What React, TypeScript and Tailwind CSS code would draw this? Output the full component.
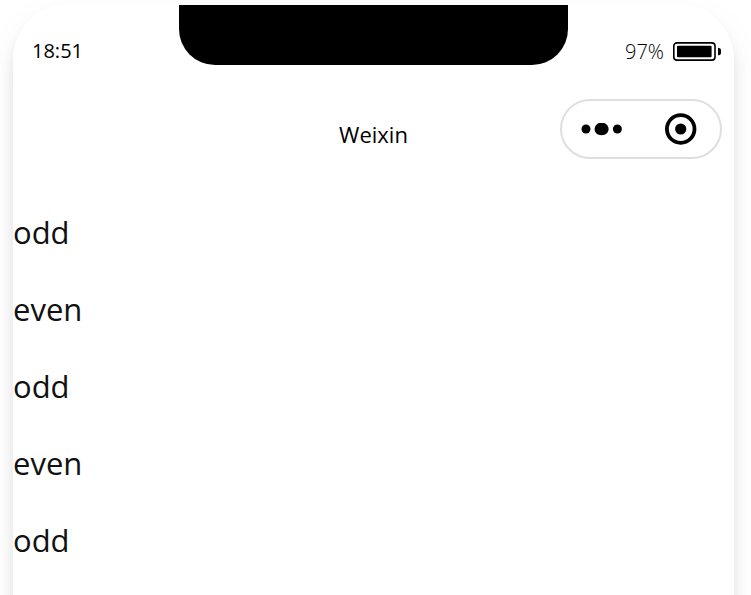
const items = ["odd", "even", "odd", "even", "odd"];

const BatteryIcon = () => {
    return (
        <svg className="h-5 w-12" viewBox="0 0 48 20" aria-hidden="true">
            <rect x="0.8" y="0.9" width="41.2" height="17.2" rx="3.2" fill="none" stroke="#000" strokeWidth="1.6"/>
            <rect x="4" y="3.8" width="34.6" height="11.4" rx="1" fill="#000"/>
            <path d="M45 5.7c2 0 3.4 1.6 3.4 3.8s-1.4 3.8-3.4 3.8z" fill="#000"/>
        </svg>
    )
}

const StatusBar = () => {
    return (
        <div className="grid h-15 grid-cols-[1fr_54%_1fr]">
            <div className="pt-8 pl-[19px] text-[20px] leading-7">18:51</div>
            <div className="h-15 rounded-b-[36px] bg-black"/>
            <div className="flex items-start justify-end gap-[9px] pr-[13px]">
                <span className="pt-[33px] text-[20px] leading-7 font-light">97%</span>
                <span className="pt-[37px]"><BatteryIcon/></span>
            </div>
        </div>
    )
}

const Capsule = () => {
    return (
        <div className="flex h-15 w-[162px] rounded-full border-2 border-[#dfdfdf]">
            <button aria-label="More" className="flex flex-1 items-center justify-center">
                <svg className="h-4 w-11" viewBox="0 0 44 16">
                    <circle cx="6" cy="8" r="4.5"/>
                    <path d="M18.8 2h5.4c2.8 1.2 4.4 3.4 4.4 6 0 3.6-3 6.2-7.1 6.2S14.6 11.6 14.6 8c0-2.6 1.6-4.8 4.2-6z"/>
                    <circle cx="37.4" cy="8" r="4.5"/>
                </svg>
            </button>
            <button aria-label="Close" className="flex flex-1 items-center justify-center">
                <svg className="size-8" viewBox="0 0 32 32">
                    <circle cx="15.7" cy="16" r="13.8" fill="none" stroke="#000" strokeWidth="3.8"/>
                    <circle cx="15.7" cy="16" r="5.6"/>
                </svg>
            </button>
        </div>
    )
}

const App = () => {
    return (
        <div className="h-screen overflow-hidden bg-white pt-[5px] pr-[17px] pl-[13px] font-['Open_Sans','Noto_Sans',sans-serif] text-black">
            <main className="min-h-[calc(100vh+60px)] rounded-t-[54px] bg-white shadow-[0_12px_14px_rgba(0,0,0,0.09),0_12px_36px_rgba(0,0,0,0.05)]">
                <StatusBar/>
                <header className="grid grid-cols-[1fr_auto_1fr] items-start pt-[34px]">
                    <h1 className="col-start-2 pt-[19px] text-[22px] leading-8">Weixin</h1>
                    <div className="flex justify-end pr-3"><Capsule/></div>
                </header>
                <ul className="pt-9">
                    {items.map((item, index) => (
                        <li key={index} className="h-[77px] text-[31px] leading-[74px] text-[#111]">{item}</li>
                    ))}
                </ul>
            </main>
        </div>
    )
}

export default App;
